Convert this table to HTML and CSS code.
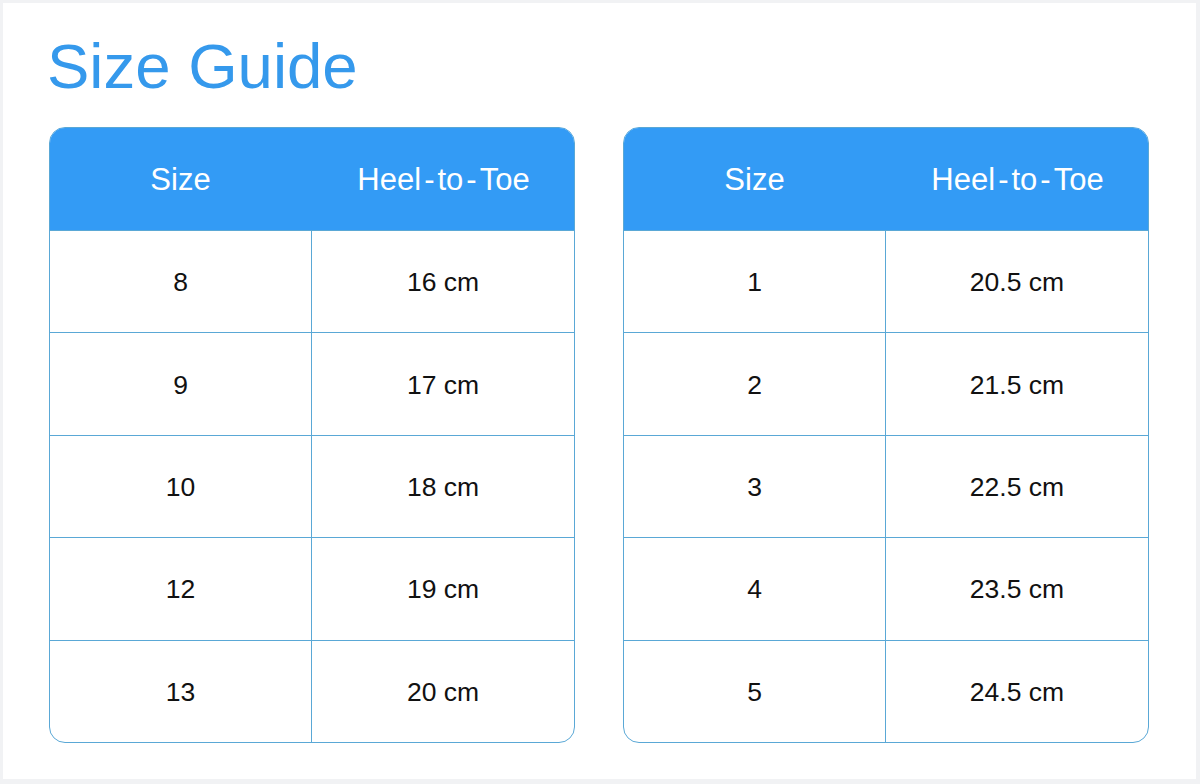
FILE: index.html
```html
<!DOCTYPE html>
<html>
<head>
<meta charset="utf-8">
<link rel="stylesheet" href="styles.css">
</head>
<body>
<div class="card">
  <h1 class="title">Size Guide</h1>
  <div class="tables">
    <div class="sg-table">
      <div class="head"><div class="hc">Size</div><div class="hc">Heel<span class="dash">-</span>to<span class="dash">-</span>Toe</div></div>
      <div class="row"><div class="c">8</div><div class="c r">16 cm</div></div>
      <div class="row"><div class="c">9</div><div class="c r">17 cm</div></div>
      <div class="row"><div class="c">10</div><div class="c r">18 cm</div></div>
      <div class="row"><div class="c">12</div><div class="c r">19 cm</div></div>
      <div class="row"><div class="c">13</div><div class="c r">20 cm</div></div>
    </div>
    <div class="sg-table">
      <div class="head"><div class="hc">Size</div><div class="hc">Heel<span class="dash">-</span>to<span class="dash">-</span>Toe</div></div>
      <div class="row"><div class="c">1</div><div class="c r">20.5 cm</div></div>
      <div class="row"><div class="c">2</div><div class="c r">21.5 cm</div></div>
      <div class="row"><div class="c">3</div><div class="c r">22.5 cm</div></div>
      <div class="row"><div class="c">4</div><div class="c r">23.5 cm</div></div>
      <div class="row"><div class="c">5</div><div class="c r">24.5 cm</div></div>
    </div>
  </div>
</div>
</body>
</html>
```
FILE: styles.css
```css
html, body {
  margin: 0;
  padding: 0;
  background: #f1f2f4;
  font-family: "Liberation Sans", Arial, sans-serif;
}
.card {
  margin: 3px 4px 5px 3px;
  height: 776px;
  background: #ffffff;
  box-sizing: border-box;
  padding: 31px 47px 0 46px;
}
.title {
  margin: 0 0 0 -2px;
  font-weight: normal;
  font-size: 63.5px;
  line-height: 64px;
  color: #3599ec;
}
.tables {
  margin-top: 29px;
  display: flex;
  gap: 48px;
}
.sg-table {
  flex: 1;
  border: 1px solid #5aa8d6;
  border-radius: 16px;
  overflow: hidden;
}
.head {
  display: grid;
  grid-template-columns: 1fr 1fr;
  box-sizing: border-box;
  height: 103px;
  background: #339bf5;
  margin: -1px -1px 0 -1px;
  padding-top: 2px;
}
.hc {
  display: flex;
  align-items: center;
  justify-content: center;
  color: #ffffff;
  font-size: 31px;
}
.dash {
  margin: 0 3px;
}
.row {
  display: grid;
  grid-template-columns: 261px 1fr;
  box-sizing: border-box;
  height: 102.4px;
  border-top: 1px solid #5aa8d6;
}
.c {
  display: flex;
  align-items: center;
  justify-content: center;
  font-size: 26.5px;
  color: #111111;
  padding-top: 2px;
}
.c.r {
  border-left: 1px solid #5aa8d6;
}
```
